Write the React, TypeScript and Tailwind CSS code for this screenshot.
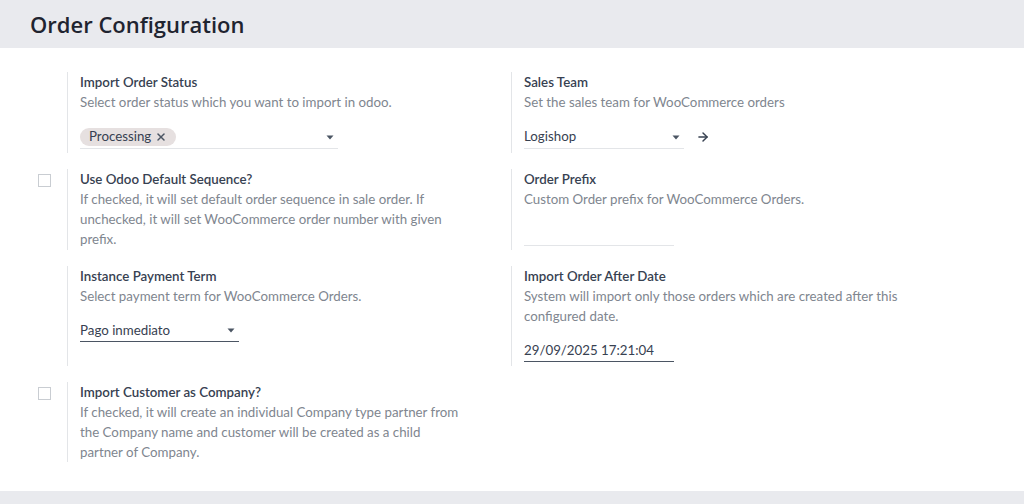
import { ArrowRight, X } from 'lucide-react';
import type { ReactNode } from 'react';

// Odoo-style settings block: optional checkbox cell, then a left-bordered content column
function Setting({
  title,
  desc,
  checkbox,
  children,
}: {
  title: string;
  desc: ReactNode;
  checkbox?: boolean;
  children?: ReactNode;
}) {
  return (
    <div className="flex">
      <div className="w-[37px] shrink-0 pl-2">
        {checkbox && <div className="mt-[5px] h-[13px] w-[13px] border border-[#c9cdd2] bg-white" />}
      </div>
      <div className={`flex-1 border-l border-[#e3e5e8] pl-3 ${children ? 'pb-1' : ''}`}>
        <div className="text-[13.3px] leading-5 font-semibold text-[#374151]">{title}</div>
        <div className="w-[385px] text-[13.3px] leading-5 text-[#80868f]">{desc}</div>
        {children}
      </div>
    </div>
  );
}

function Caret() {
  return (
    <svg width="8" height="5" viewBox="0 0 8 5" className="text-[#4b5563]">
      <path d="M0.5 0.5h7L4 4.5z" fill="currentColor" />
    </svg>
  );
}

export default function App() {
  return (
    <div
      className="flex h-[504px] w-[1024px] flex-col bg-white"
      style={{ fontFamily: 'Lato, "Noto Sans", sans-serif' }}
    >
      <header className="flex h-12 shrink-0 items-center bg-[#e9eaee] px-[30px]">
        <h1
          className="text-[22px] font-semibold text-[#1f2430]"
          style={{ fontFamily: '"Open Sans", "Noto Sans", sans-serif' }}
        >
          Order Configuration
        </h1>
      </header>

      <main className="flex-1 px-[30px] pt-6">
        <div className="grid w-[888px] grid-cols-2 gap-y-4">
          <Setting title="Import Order Status" desc="Select order status which you want to import in odoo.">
            <div className="mt-3 flex h-[25px] w-[258px] items-center justify-between border-b border-[#e3e5e8] pr-1 pt-[2px]">
              <span className="flex h-[18px] items-center gap-1 rounded-full bg-[#e6e0e0] px-[9px] text-[13.3px] text-[#374151]">
                Processing <X size={12} strokeWidth={3} className="text-[#4b5563]" />
              </span>
              <Caret />
            </div>
          </Setting>

          <Setting title="Sales Team" desc="Set the sales team for WooCommerce orders">
            <div className="mt-3 flex items-center gap-3">
              <div className="flex h-[25px] w-[160px] items-center justify-between border-b border-[#e3e5e8] pr-1 pt-[2px]">
                <span className="text-[13.3px] text-[#374151]">Logishop</span>
                <Caret />
              </div>
              <ArrowRight size={14} strokeWidth={2.5} className="text-[#374151]" />
            </div>
          </Setting>

          <Setting
            checkbox
            title="Use Odoo Default Sequence?"
            desc="If checked, it will set default order sequence in sale order. If unchecked, it will set WooCommerce order number with given prefix."
          />

          <Setting title="Order Prefix" desc="Custom Order prefix for WooCommerce Orders.">
            <div className="mt-[13px] h-6 w-[150px] border-b border-[#e3e5e8]" />
          </Setting>

          <Setting title="Instance Payment Term" desc="Select payment term for WooCommerce Orders.">
            <div className="mt-3 flex h-6 w-[159px] items-center justify-between border-b border-[#4b5563] pr-1 pt-[2px]">
              <span className="text-[13.3px] text-[#374151]">Pago inmediato</span>
              <Caret />
            </div>
          </Setting>

          <Setting
            title="Import Order After Date"
            desc="System will import only those orders which are created after this configured date."
          >
            <div className="mt-3 flex h-6 w-[150px] items-center border-b border-[#4b5563] pt-[2px]">
              <span className="text-[13.3px] text-[#374151]">29/09/2025 17:21:04</span>
            </div>
          </Setting>

          <Setting
            checkbox
            title="Import Customer as Company?"
            desc="If checked, it will create an individual Company type partner from the Company name and customer will be created as a child partner of Company."
          />
        </div>
      </main>

      <footer className="h-[13px] shrink-0 bg-[#e9eaee]" />
    </div>
  );
}
